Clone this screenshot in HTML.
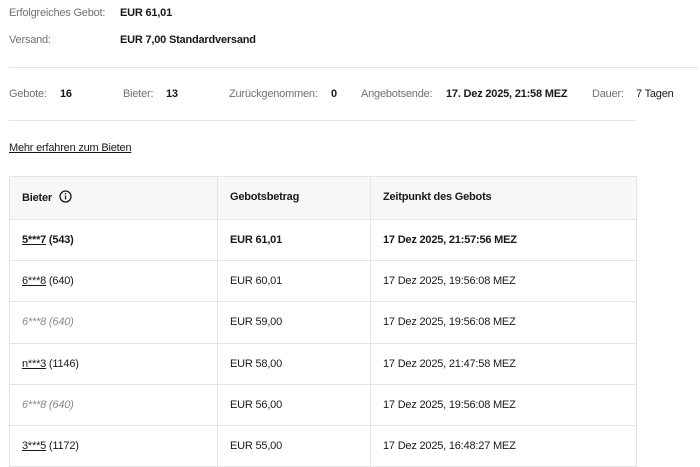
<!DOCTYPE html>
<html><head><meta charset="utf-8"><style>
*{margin:0;padding:0;box-sizing:border-box}
body{width:700px;height:453px;overflow:hidden;background:#fff;font-family:"Liberation Sans",Arial,sans-serif;font-size:11px;letter-spacing:-0.2px;color:#191919;position:relative}
.a{position:absolute;white-space:nowrap}
.l{color:#707070}
b{font-weight:bold}
.hr{position:absolute;height:1px;background:#e5e5e5;left:9px}
table{position:absolute;left:9px;top:176px;width:628px;border-collapse:collapse}
td,th{border:1px solid #e5e5e5;text-align:left;padding:0 12px;height:41.2px;font-weight:normal}
th{background:#f7f7f7;font-weight:bold;height:43px;padding-bottom:3px}
u{text-decoration:underline}
.g{color:#8a8a8a;font-style:italic}
</style></head><body>
<div class="a l" style="left:9px;top:7px">Erfolgreiches Gebot:</div><div class="a" style="left:120px;top:7px"><b>EUR 61,01</b></div>
<div class="a l" style="left:9px;top:34px">Versand:</div><div class="a" style="left:120px;top:34px"><b>EUR 7,00 Standardversand</b></div>
<div class="hr" style="top:67px;width:689px"></div>
<div class="a l" style="left:9px;top:88px">Gebote:</div><div class="a" style="left:60px;top:88px"><b>16</b></div>
<div class="a l" style="left:123px;top:88px">Bieter:</div><div class="a" style="left:166px;top:88px"><b>13</b></div>
<div class="a l" style="left:229px;top:88px">Zurückgenommen:</div><div class="a" style="left:331px;top:88px"><b>0</b></div>
<div class="a l" style="left:361px;top:88px">Angebotsende:</div><div class="a" style="left:446px;top:88px"><b>17. Dez 2025, 21:58 MEZ</b></div>
<div class="a l" style="left:592px;top:88px">Dauer:</div><div class="a" style="left:636px;top:88px">7 Tagen</div>
<div class="hr" style="top:120px;width:627px"></div>
<div class="a" style="left:9px;top:142px"><u>Mehr erfahren zum Bieten</u></div>
<table>
<tr><th style="width:208px">Bieter <svg width="13" height="13" viewBox="0 0 13 13" style="vertical-align:-2px;margin-left:4px"><circle cx="6.5" cy="6.5" r="5.5" fill="none" stroke="#191919" stroke-width="1.3"/><rect x="5.9" y="5.5" width="1.3" height="4" fill="#191919"/><circle cx="6.5" cy="3.8" r="0.8" fill="#191919"/></svg></th><th style="width:153px">Gebotsbetrag</th><th>Zeitpunkt des Gebots</th></tr>
<tr><td><b><u>5***7</u> (543)</b></td><td><b>EUR 61,01</b></td><td><b>17 Dez 2025, 21:57:56 MEZ</b></td></tr>
<tr><td><u>6***8</u> (640)</td><td>EUR 60,01</td><td>17 Dez 2025, 19:56:08 MEZ</td></tr>
<tr><td class="g">6***8 (640)</td><td>EUR 59,00</td><td>17 Dez 2025, 19:56:08 MEZ</td></tr>
<tr><td><u>n***3</u> (1146)</td><td>EUR 58,00</td><td>17 Dez 2025, 21:47:58 MEZ</td></tr>
<tr><td class="g">6***8 (640)</td><td>EUR 56,00</td><td>17 Dez 2025, 19:56:08 MEZ</td></tr>
<tr><td><u>3***5</u> (1172)</td><td>EUR 55,00</td><td>17 Dez 2025, 16:48:27 MEZ</td></tr>
</table>
</body></html>
